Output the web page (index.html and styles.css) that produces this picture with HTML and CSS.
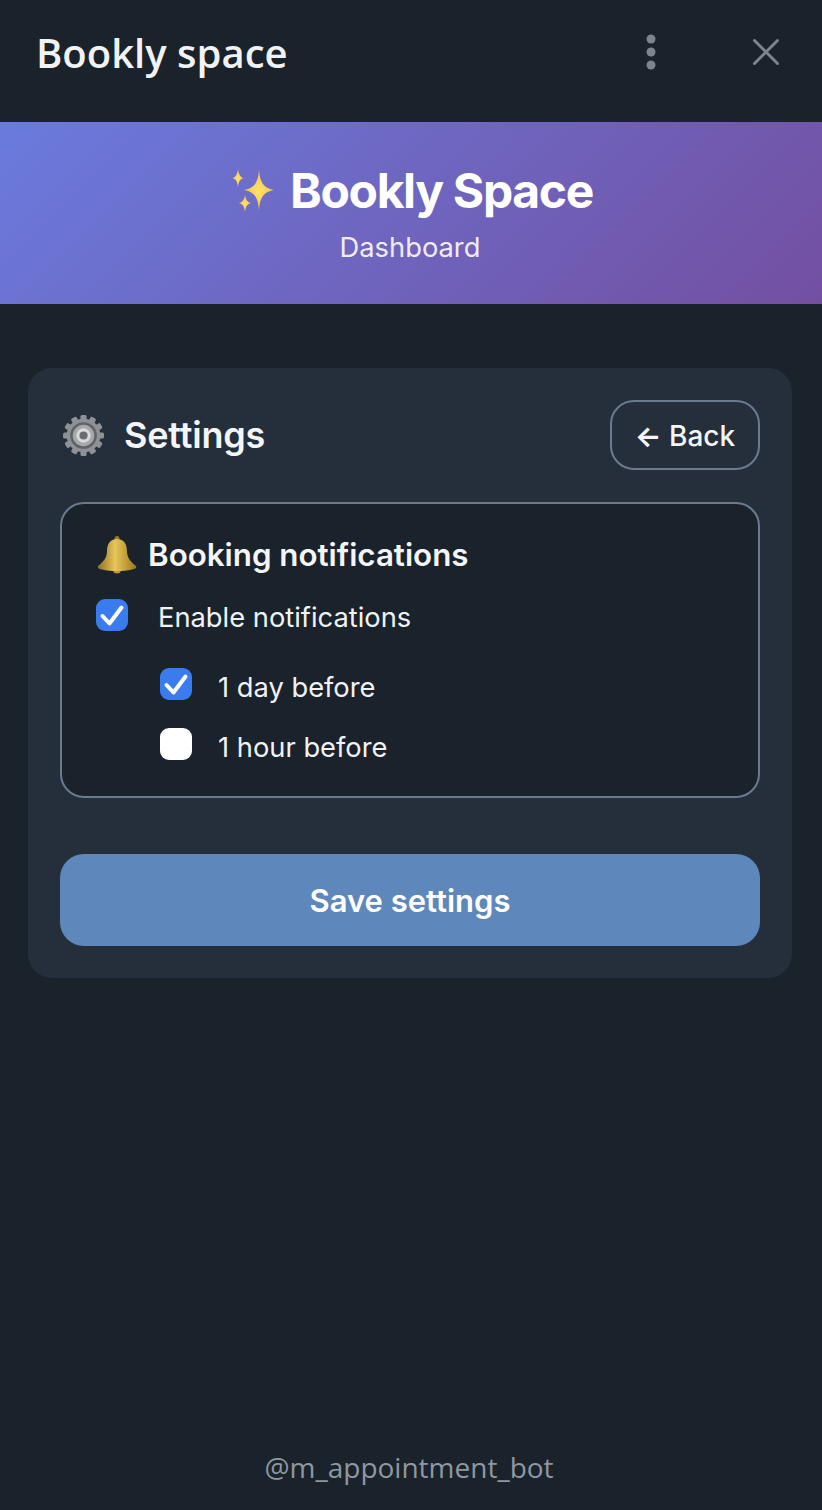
FILE: index.html
```html
<!DOCTYPE html>
<html lang="en">
<head>
    <meta charset="UTF-8">
    <title>Bookly space</title>
    <link rel="stylesheet" href="styles.css">
</head>
<body>
    <header class="topbar">
        <span class="topbar-title">Bookly space</span>
        <div class="topbar-actions">
            <svg class="icon-more" width="12" height="36" viewBox="0 0 12 36">
                <circle cx="6" cy="5" r="4.5" fill="#7c858e"/>
                <circle cx="6" cy="18" r="4.5" fill="#7c858e"/>
                <circle cx="6" cy="31" r="4.5" fill="#7c858e"/>
            </svg>
            <svg class="icon-close" width="28" height="28" viewBox="0 0 28 28">
                <path d="M2.500 2.500 L25.500 25.500 M25.500 2.500 L2.500 25.500" stroke="#7c858e" stroke-width="3" stroke-linecap="round" fill="none"/>
            </svg>
        </div>
    </header>

    <section class="hero">
        <h1 class="hero-title">
            <svg class="icon-sparkles" width="46" height="46" viewBox="0 0 46 46">
                <defs>
                    <radialGradient id="spark">
                        <stop offset="0" stop-color="#ffe36b"/>
                        <stop offset="1" stop-color="#f3c348"/>
                    </radialGradient>
                </defs>
                <path d="M27 2 C28 14 31 20 42 22 C31 24 28 30 27 42 C26 30 23 24 12 22 C23 20 26 14 27 2 Z" fill="url(#spark)"/>
                <path d="M6 1 C6.600 6 8 9 11.500 10 C8 11 6.600 14 6 19 C5.400 14 4 11 0.500 10 C4 9 5.400 6 6 1 Z" fill="url(#spark)"/>
                <path d="M13 27 C13.600 31 15 34 19 35 C15 36 13.600 39 13 44 C12.400 39 11 36 7 35 C11 34 12.400 31 13 27 Z" fill="url(#spark)"/>
            </svg>
            <span>Bookly Space</span>
        </h1>
        <p class="hero-sub">Dashboard</p>
    </section>

    <main class="card">
        <div class="card-head">
            <h2 class="card-title">
                <svg class="icon-gear" width="44" height="44" viewBox="-1 0 43 43">
                    <g fill="#8e9196">
                        <circle cx="22" cy="22" r="16.500"/>
                        <g id="teeth">
                            <rect x="19" y="2" width="6" height="8" rx="1.500"/>
                            <rect x="19" y="34" width="6" height="8" rx="1.500"/>
                            <rect x="2" y="19" width="8" height="6" rx="1.500"/>
                            <rect x="34" y="19" width="8" height="6" rx="1.500"/>
                        </g>
                        <use href="#teeth" transform="rotate(30 22 22)"/>
                        <use href="#teeth" transform="rotate(60 22 22)"/>
                    </g>
                    <circle cx="22" cy="22" r="13" fill="#5f6266"/>
                    <circle cx="22" cy="22" r="10.500" fill="#a6a8ac"/>
                    <circle cx="22" cy="22" r="7" fill="#d9dadc"/>
                    <circle cx="22" cy="22" r="4" fill="#6a6d72"/>
                </svg>
                <span>Settings</span>
            </h2>
            <button class="btn-back"><span class="arrow">←</span> Back</button>
        </div>

        <div class="panel">
            <h3 class="panel-title">
                <svg class="icon-bell" width="42" height="42" viewBox="0 0 42 42">
                    <defs>
                        <linearGradient id="bell" x1="0" x2="1" y1="0" y2="0">
                            <stop offset="0" stop-color="#8f6f22"/>
                            <stop offset="0.45" stop-color="#e8c65a"/>
                            <stop offset="1" stop-color="#9b7722"/>
                        </linearGradient>
                    </defs>
                    <circle cx="21" cy="35" r="4.500" fill="#c29433"/>
                    <circle cx="21" cy="4.500" r="2.500" fill="#9a7a2c"/>
                    <path d="M21 5 C14 5 11 10 11 17 C11 24 7 28 2 32 C1 34 3 35 6 35.500 C15 37.500 27 37.500 36 35.500 C39 35 41 34 40 32 C35 28 31 24 31 17 C31 10 28 5 21 5 Z" fill="url(#bell)"/>
                </svg>
                <span>Booking notifications</span>
            </h3>

            <label class="check-row">
                <span class="check check-on">
                    <svg width="32" height="32" viewBox="0 0 32 32"><path d="M6.500 17 L13.500 24.500 L25.500 8.500" stroke="#fff" stroke-width="4" stroke-linecap="round" stroke-linejoin="round" fill="none"/></svg>
                </span>
                <span class="check-label">Enable notifications</span>
            </label>

            <div class="sub-options">
                <label class="check-row sub-row">
                    <span class="check check-on">
                        <svg width="32" height="32" viewBox="0 0 32 32"><path d="M6.500 17 L13.500 24.500 L25.500 8.500" stroke="#fff" stroke-width="4" stroke-linecap="round" stroke-linejoin="round" fill="none"/></svg>
                    </span>
                    <span class="check-label">1 day before</span>
                </label>
                <label class="check-row sub-row">
                    <span class="check"></span>
                    <span class="check-label">1 hour before</span>
                </label>
            </div>
        </div>

        <button class="btn-save">Save settings</button>
    </main>

    <footer class="foot">@m_appointment_bot</footer>
</body>
</html>
```

FILE: styles.css
```css
* {
    box-sizing: border-box;
}
body {
    margin: 0;
    min-height: 1510px;
    display: flex;
    flex-direction: column;
    background: #1a222c;
    color: #fff;
    font-family: Inter, "Liberation Sans", sans-serif;
}
h1, h2, h3, p {
    margin: 0;
}

.topbar {
    height: 122px;
    padding: 0 42px 18px 36px;
    display: flex;
    align-items: center;
    justify-content: space-between;
}
.topbar-title {
    font-family: "Open Sans", sans-serif;
    font-size: 40px;
    font-weight: 600;
    color: #f1f2f3;
}
.topbar-actions {
    display: flex;
    align-items: center;
    gap: 95px;
}

.hero {
    height: 182px;
    padding-top: 39px;
    text-align: center;
    background: linear-gradient(135deg, #6a7bdd 0%, #734fa1 100%);
}
.hero-title {
    display: flex;
    align-items: center;
    justify-content: center;
    gap: 12px;
    padding-left: 3px;
    font-size: 48px;
    line-height: 60px;
    font-weight: 700;
    letter-spacing: -1.35px;
}
.hero-sub {
    margin-top: 10px;
    padding-right: 2px;
    font-size: 27.300px;
    line-height: 34px;
    color: #f0ecf8;
}

.card {
    margin: 64px 30px 0 28px;
    padding: 32px;
    background: #252f3c;
    border-radius: 24px;
}
.card-head {
    display: flex;
    align-items: center;
    justify-content: space-between;
    height: 70px;
    margin-bottom: 32px;
}
.card-title {
    display: flex;
    align-items: center;
    gap: 20px;
    font-size: 36px;
    font-weight: 600;
    letter-spacing: -0.2px;
    color: #f4f5f7;
}
.btn-back {
    width: 150px;
    height: 70px;
    padding: 2px 0 0;
    background: transparent;
    border: 2px solid #6b7a8d;
    border-radius: 24px;
    color: #f4f5f7;
    font-family: inherit;
    font-size: 28px;
    font-weight: 500;
}
.arrow {
    font-weight: 700;
}

.panel {
    height: 296px;
    padding: 29px 34px;
    background: #1a222c;
    border: 2px solid #6b7a8d;
    border-radius: 24px;
}
.panel-title {
    display: flex;
    align-items: center;
    gap: 10px;
    font-size: 31.300px;
    line-height: 44px;
    font-weight: 600;
    color: #f4f5f7;
}
.check-row {
    display: flex;
    align-items: center;
    gap: 30px;
    margin-top: 22px;
    height: 32px;
}
.check {
    width: 32px;
    height: 32px;
    flex: none;
    border-radius: 9px;
    background: #fff;
}
.check-on {
    background: #3a7bef;
}
.check-label {
    padding-top: 4px;
    font-size: 27.300px;
    color: #f1f2f4;
}
.sub-options {
    margin-top: 37px;
    padding-left: 64px;
}
.sub-row {
    gap: 26px;
    margin-top: 28px;
}
.sub-row:first-child {
    margin-top: 0;
}
.sub-row .check-label {
    padding-top: 6px;
}

.btn-save {
    display: block;
    width: 100%;
    height: 92px;
    margin-top: 56px;
    border: none;
    border-radius: 24px;
    background: #5e88bb;
    color: #fff;
    font-family: inherit;
    font-size: 31px;
    font-weight: 600;
}

.foot {
    margin-top: auto;
    padding: 0 4px 23px 0;
    text-align: center;
    font-family: "Open Sans", sans-serif;
    font-size: 28px;
    line-height: 40px;
    color: #8f979f;
}
```
